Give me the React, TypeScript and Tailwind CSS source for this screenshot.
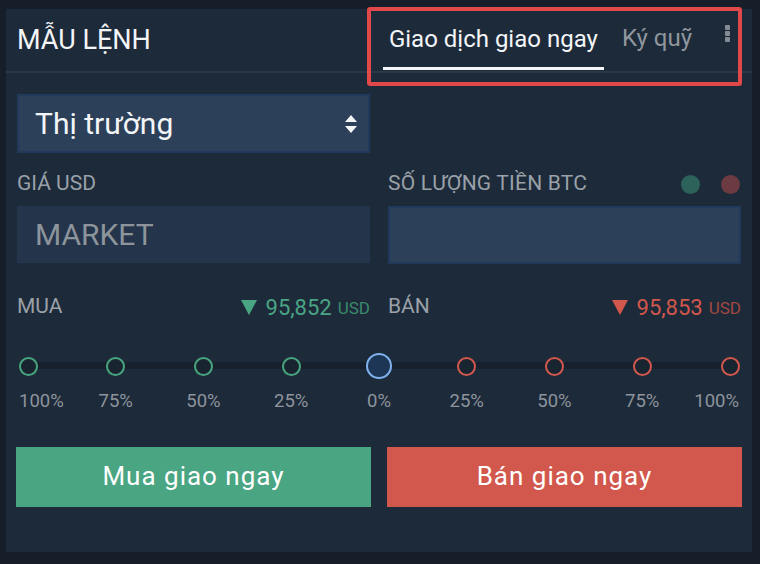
import React from "react";

const font = { fontFamily: "Roboto, 'Noto Sans', sans-serif" };

const steps = [
  { label: "100%", side: "buy" },
  { label: "75%", side: "buy" },
  { label: "50%", side: "buy" },
  { label: "25%", side: "buy" },
  { label: "0%", side: "none" },
  { label: "25%", side: "sell" },
  { label: "50%", side: "sell" },
  { label: "75%", side: "sell" },
  { label: "100%", side: "sell" },
];

function SortIcon() {
  return (
    <svg width="14" height="20" viewBox="0 0 14 20">
      <path d="M7 1 L13 8 L1 8 Z" fill="#f2f4f6" />
      <path d="M7 19 L13 12 L1 12 Z" fill="#f2f4f6" />
    </svg>
  );
}

function Tri({ color }: { color: string }) {
  return (
    <svg width="16" height="15" viewBox="0 0 16 15" className="mr-[9px]">
      <path d="M0 0 L16 0 L8 15 Z" fill={color} />
    </svg>
  );
}

function Slider() {
  return (
    <div className="mx-[-2px]">
      <div className="relative flex justify-between items-center h-[28px]">
        <div className="absolute left-[13px] right-[13px] top-[10px] h-[7px] bg-[#16212d]" />
        {steps.map((s, i) => (
          <div key={i} className="relative w-[26px] flex justify-center">
            {s.side === "none" ? (
              <div className="w-[26px] h-[26px] rounded-full border-2 border-[#7fb2ec] bg-[#1e3656]" />
            ) : (
              <div
                className={
                  "w-[19px] h-[19px] rounded-full border-2 bg-[#192431] " +
                  (s.side === "buy" ? "border-[#48a67f]" : "border-[#d2574c]")
                }
              />
            )}
          </div>
        ))}
      </div>
      <div className="flex justify-between mt-[12px] text-[18.5px] text-[#8d949b] leading-none">
        {steps.map((s, i) => (
          <div
            key={i}
            className={
              "w-[26px] flex whitespace-nowrap " +
              (i === 0 ? "justify-start pl-[4px]" : i === 8 ? "justify-end pr-[4px]" : "justify-center")
            }
          >
            {s.label}
          </div>
        ))}
      </div>
    </div>
  );
}

export default function App() {
  return (
    <div className="w-[760px] h-[564px] bg-[#151e29] pt-[9px] pl-[6px]" style={font}>
      <div className="relative w-[746px] h-[543px] bg-[#1d2a3a]">
        {/* header */}
        <div className="flex items-end h-[64px] border-b-2 border-[#2c3846]">
          <div className="self-center pl-[11px] text-[27px] text-[#f3f5f7]">MẪU LỆNH</div>
          <div className="ml-auto flex items-end h-full">
            <div className="flex flex-col justify-center h-full">
              <div className="flex-1 flex items-center px-[6px] pt-[1px] text-[24px] text-[#f3f5f7]">Giao dịch giao ngay</div>
              <div className="h-[3px] bg-[#f3f5f7] mb-[1px]" />
            </div>
            <div className="flex items-center h-full pl-[18px] pr-[12px] pb-[4px] text-[24px] text-[#8f969d]">Ký quỹ</div>
            <div className="flex flex-col gap-[1px] self-start mt-[16px] ml-[21px] mr-[22px]">
              <div className="w-[5px] h-[5px] rounded-[1px] bg-[#858b92]" />
              <div className="w-[5px] h-[5px] rounded-[1px] bg-[#858b92]" />
              <div className="w-[5px] h-[5px] rounded-[1px] bg-[#858b92]" />
            </div>
          </div>
        </div>

        {/* annotation box */}
        <div className="absolute left-[361px] top-[-2px] w-[375px] h-[79px] border-4 border-[#e0484a] rounded-[3px]" />

        <div className="px-[11px]">
          <div className="mt-[21px] w-[353px] h-[59px] bg-[#2d4059] border-2 border-[#21395a] flex items-center pl-[16px] pr-[10px]">
            <span className="text-[30px] text-[#f3f5f7]">Thị trường</span>
            <span className="ml-auto flex">
              <SortIcon />
            </span>
          </div>

          <div className="grid grid-cols-2 gap-x-[18px] mt-[19px]">
            <div className="text-[21px] text-[#9aa1a8] h-[24px] flex items-center">GIÁ USD</div>
            <div className="flex items-center h-[24px]">
              <span className="text-[21px] text-[#9aa1a8] tracking-[0.2px]">SỐ LƯỢNG TIỀN BTC</span>
              <span className="ml-auto flex gap-[21px] pr-[1px]">
                <span className="w-[19px] h-[19px] rounded-full bg-[#2c6259]" />
                <span className="w-[19px] h-[19px] rounded-full bg-[#6b3b41]" />
              </span>
            </div>

            <div className="mt-[10px] h-[57px] bg-[#24354b] flex items-center pl-[18px] text-[30px] text-[#8d949b]">MARKET</div>
            <div className="mt-[10px] h-[58px] bg-[#2d4059] border-2 border-[#21395a]" />

            <div className="mt-[30px] flex items-center h-[26px]">
              <span className="text-[21px] text-[#9aa1a8]">MUA</span>
              <span className="ml-auto flex items-center">
                <Tri color="#4aa583" />
                <span className="text-[22px] text-[#4aa583]">95,852</span>
                <span className="ml-[6px] mt-[3px] text-[17px] text-[#3b8a6c]">USD</span>
              </span>
            </div>
            <div className="mt-[30px] flex items-center h-[26px]">
              <span className="text-[21px] text-[#9aa1a8]">BÁN</span>
              <span className="ml-auto flex items-center">
                <Tri color="#d2574c" />
                <span className="text-[22px] text-[#d2574c]">95,853</span>
                <span className="ml-[6px] mt-[3px] text-[17px] text-[#a3483f]">USD</span>
              </span>
            </div>
          </div>

          <div className="mt-[32px]">
            <Slider />
          </div>

          <div className="grid grid-cols-2 gap-x-[16px] mt-[36px] mx-[-1px]">
            <button className="h-[60px] bg-[#4aa583] text-white text-[26px] tracking-[1px]">Mua giao ngay</button>
            <button className="h-[60px] bg-[#d2574c] text-white text-[26px] tracking-[1px]">Bán giao ngay</button>
          </div>
        </div>
      </div>
    </div>
  );
}
